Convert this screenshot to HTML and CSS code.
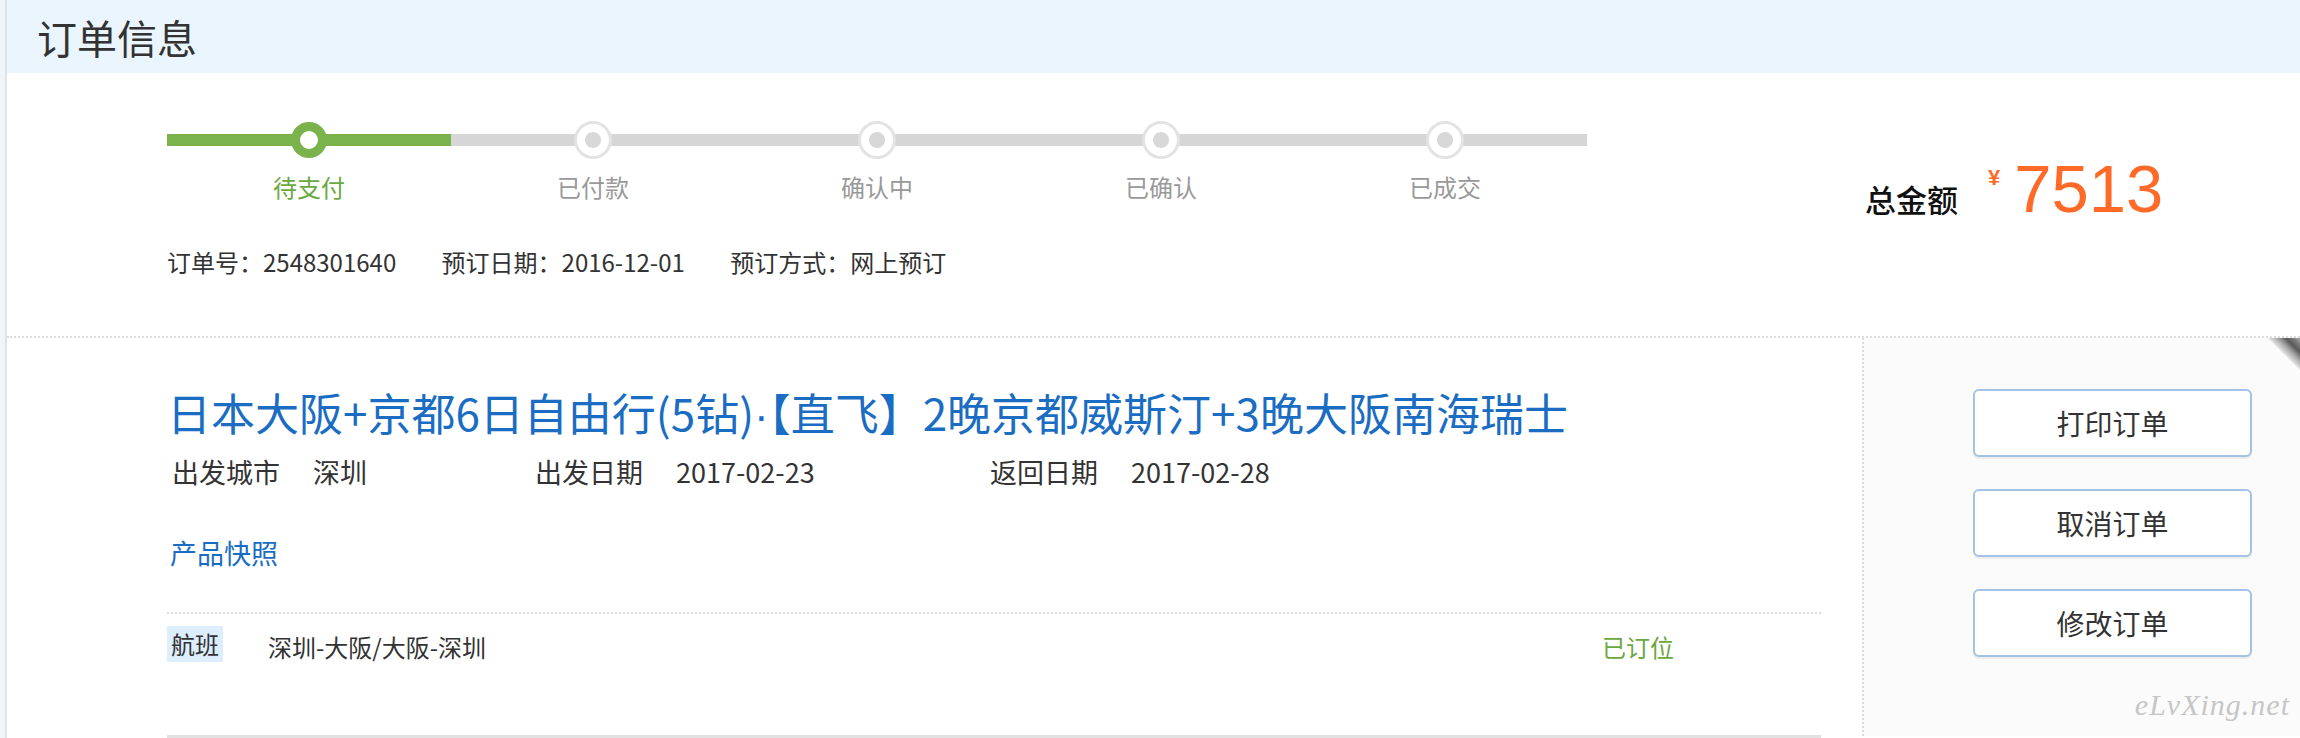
FILE: index.html
```html
<!DOCTYPE html>
<html lang="zh-CN">
<head>
<meta charset="utf-8">
<title>订单信息</title>
<link rel="stylesheet" href="styles.css">
</head>
<body>
<div class="page">
  <div class="header"><h1 class="header-title">订单信息</h1></div>

  <div class="summary">
    <div class="progress-area">
      <div class="steps">
        <div class="step step-done">
          <div class="track"><span class="dot"></span></div>
          <div class="step-label">待支付</div>
        </div>
        <div class="step">
          <div class="track"><span class="dot"></span></div>
          <div class="step-label">已付款</div>
        </div>
        <div class="step">
          <div class="track"><span class="dot"></span></div>
          <div class="step-label">确认中</div>
        </div>
        <div class="step">
          <div class="track"><span class="dot"></span></div>
          <div class="step-label">已确认</div>
        </div>
        <div class="step">
          <div class="track"><span class="dot"></span></div>
          <div class="step-label">已成交</div>
        </div>
      </div>
      <div class="order-meta">
        <span class="meta-item">订单号：2548301640</span>
        <span class="meta-item">预订日期：2016-12-01</span>
        <span class="meta-item">预订方式：网上预订</span>
      </div>
    </div>
    <div class="total">
      <span class="total-label">总金额</span>
      <span class="total-currency">¥</span>
      <span class="total-value">7513</span>
    </div>
  </div>

  <div class="detail">
    <div class="detail-main">
      <h2 class="product-title">日本大阪+京都6日自由行(5钻)<span class="mid-dot">·</span>【直飞】2晚京都威斯汀+3晚大阪南海瑞士</h2>
      <div class="trip-info">
        <div class="trip-item trip-city"><span class="trip-label">出发城市</span><span class="trip-value">深圳</span></div>
        <div class="trip-item trip-depart"><span class="trip-label">出发日期</span><span class="trip-value">2017-02-23</span></div>
        <div class="trip-item"><span class="trip-label">返回日期</span><span class="trip-value">2017-02-28</span></div>
      </div>
      <div class="snapshot">产品快照</div>
      <div class="flight">
        <div class="flight-row">
          <span class="flight-tag">航班</span>
          <span class="flight-route">深圳-大阪/大阪-深圳</span>
          <span class="flight-status">已订位</span>
        </div>
      </div>
    </div>
    <div class="actions">
      <span class="corner-ribbon"></span>
      <div class="btn-list">
        <button class="btn" type="button">打印订单</button>
        <button class="btn" type="button">取消订单</button>
        <button class="btn" type="button">修改订单</button>
      </div>
      <div class="watermark">eLvXing.net</div>
    </div>
  </div>
</div>
</body>
</html>
```

FILE: styles.css
```css
html, body {
  margin: 0;
  padding: 0;
}
body {
  background: #f1f5f9;
  font-family: "Noto Sans CJK SC", "Noto Sans", sans-serif;
  color: #333;
  height: 738px;
  overflow: hidden;
}
.page {
  margin-left: 5px;
  border-left: 2px solid #dfe3e8;
  background: #fff;
  height: 738px;
}

/* header */
.header {
  height: 73px;
  background: #eaf5fe;
  padding-left: 30px;
  display: flex;
  align-items: center;
}
.header-title {
  margin: 0;
  font-size: 40px;
  font-weight: normal;
  line-height: 1;
  color: #333;
}

/* summary */
.summary {
  display: flex;
  height: 265px;
  box-sizing: border-box;
  border-bottom: 2px dotted #dcdcdc;
}
.progress-area {
  width: 1858px;
  box-sizing: border-box;
  padding-left: 160px;
  padding-top: 48px;
}
.steps {
  display: flex;
}
.step {
  width: 284px;
}
.track {
  height: 38px;
  display: flex;
  align-items: center;
  justify-content: center;
  background: linear-gradient(#d6d6d6, #d6d6d6) center / 100% 12px no-repeat;
}
.step-done .track {
  background: linear-gradient(#7ab24c, #7ab24c) center / 100% 12px no-repeat;
}
.dot {
  width: 38px;
  height: 38px;
  box-sizing: border-box;
  border-radius: 50%;
  border: 3px solid #e3e3e3;
  background: radial-gradient(circle, #d8d8d8 0 7.5px, #fff 8.5px);
}
.step-done .dot {
  width: 36px;
  height: 36px;
  border: 9px solid #7ab24c;
  background: #fff;
}
.step-label {
  margin-top: 13px;
  text-align: center;
  font-size: 24px;
  line-height: 30px;
  color: #999;
}
.step-done .step-label {
  color: #6aa842;
}
.order-meta {
  margin-top: 45px;
  font-size: 24px;
  line-height: 30px;
  color: #333;
  white-space: nowrap;
}
.meta-item {
  margin-right: 40px;
}

.total {
  display: flex;
  align-items: baseline;
  padding-top: 82px;
  white-space: nowrap;
}
.total-label {
  font-size: 31px;
  line-height: 1;
  color: #111;
  font-weight: 500;
}
.total-currency {
  align-self: flex-start;
  margin-top: 12px;
  margin-left: 30px;
  font-family: "Liberation Sans", sans-serif;
  font-weight: bold;
  font-size: 22px;
  line-height: 1;
  color: #ff6a28;
}
.total-value {
  margin-left: 14px;
  font-family: "Liberation Sans", sans-serif;
  font-size: 67px;
  line-height: 1;
  color: #ff6a28;
}

/* detail */
.detail {
  display: flex;
  height: 398px;
}
.detail-main {
  width: 1855px;
  box-sizing: border-box;
  padding: 46px 41px 0 160px;
}
.product-title {
  margin: 0;
  height: 56px;
  font-size: 44px;
  line-height: 56px;
  font-weight: normal;
  color: #1a6dc2;
  white-space: nowrap;
}
.mid-dot {
  font-family: "Liberation Sans", sans-serif;
  line-height: 1;
}
.trip-info {
  margin-top: 14px;
  display: flex;
  font-size: 27px;
  line-height: 36px;
  color: #333;
  padding-left: 5px;
}
.trip-item {
  display: flex;
}
.trip-city {
  width: 363px;
}
.trip-depart {
  width: 455px;
}
.trip-label {
  margin-right: 33px;
}
.snapshot {
  margin-top: 45px;
  font-size: 27px;
  line-height: 36px;
  color: #1a6dc2;
  padding-left: 3px;
}
.flight {
  margin-top: 41px;
  border-top: 2px dotted #dcdcdc;
  border-bottom: 3px solid #e2e2e2;
  padding: 9px 0 70px;
}
.flight-row {
  display: grid;
  grid-template-columns: 56px 1fr 219px;
  column-gap: 45px;
  align-items: center;
  font-size: 24px;
  line-height: 36px;
}
.flight-tag {
  background: #ddeeff;
  text-align: center;
  color: #333;
}
.flight-route {
  color: #333;
  padding-top: 6px;
}
.flight-status {
  color: #6aa842;
  padding-top: 6px;
}

/* actions */
.actions {
  position: relative;
  flex: 1;
  border-left: 2px dotted #dcdcdc;
  background: #fbfbfb;
  padding-top: 51px;
  padding-left: 109px;
}
.corner-ribbon {
  position: absolute;
  top: 0;
  right: 0;
  width: 33px;
  height: 33px;
  background: linear-gradient(45deg, transparent 50%, #e0e0e0 53%, #a5a5a5 66%, #5a5a5a 78%, #777 88%, #aaa 100%);
}
.btn-list {
  display: flex;
  flex-direction: column;
  gap: 32px;
}
.btn {
  width: 279px;
  height: 68px;
  box-sizing: border-box;
  border: 2px solid #a2c3e6;
  border-radius: 6px;
  background: #fff;
  box-shadow: 0 2px 1px rgba(0, 0, 0, 0.06);
  font-family: "Noto Sans CJK SC", sans-serif;
  font-size: 28px;
  color: #333;
  padding: 0;
  cursor: pointer;
}
.watermark {
  margin-top: 30px;
  padding-right: 10px;
  text-align: right;
  font-family: "Liberation Serif", serif;
  font-style: italic;
  font-size: 30px;
  letter-spacing: 1px;
  line-height: 36px;
  color: #c6c6c6;
  white-space: nowrap;
}
```
